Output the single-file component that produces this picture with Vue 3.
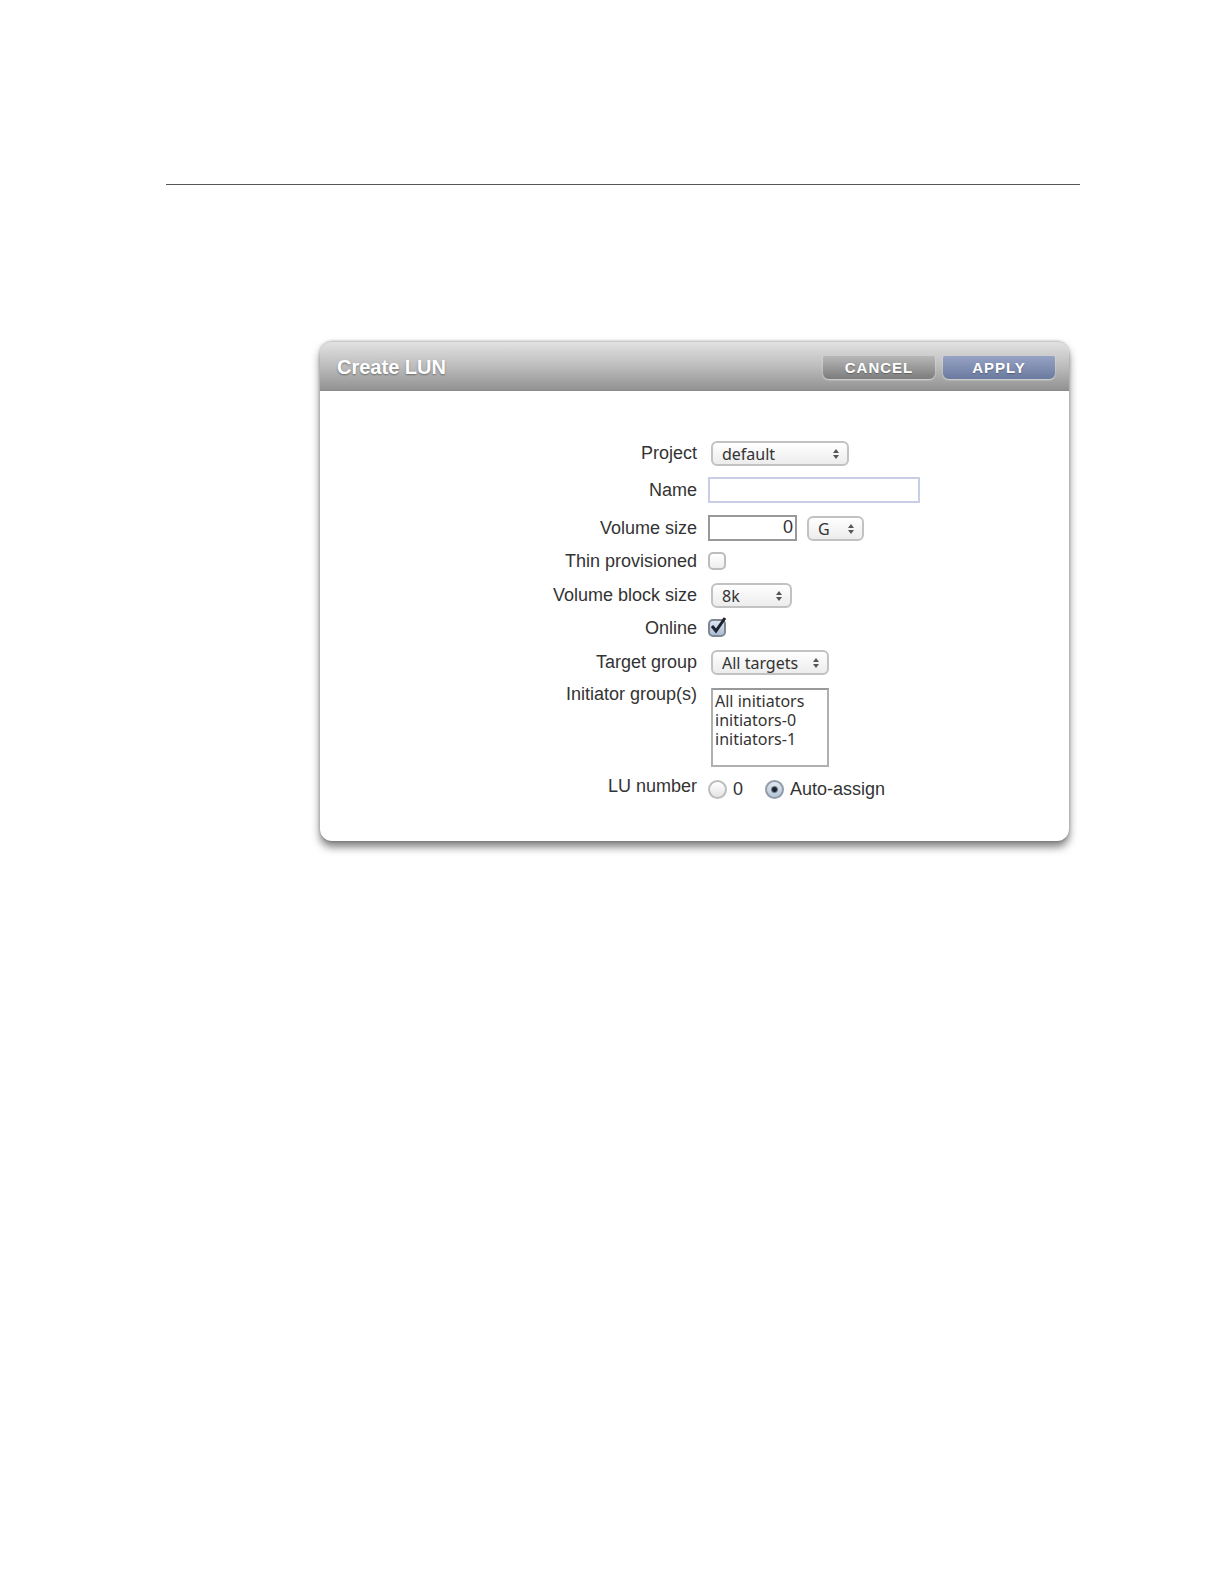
<template>
  <main class="page">
    <hr class="page-rule" />
    <form class="panel" @submit.prevent="handleSubmit">
      <header class="panel-header">
        <h1>Create LUN</h1>
        <div class="actions">
          <button type="button" class="btn" @click="handleCancel">CANCEL</button>
          <button type="submit" class="btn btn-apply">APPLY</button>
        </div>
      </header>
      <div class="fields">
        <label class="name" for="project">Project</label>
        <div class="control">
          <span class="dropdown project">
            <select id="project" v-model="form.project">
              <option>default</option>
            </select>
            <svg viewBox="0 0 8 10"><path d="M4 0L7 4H1zM4 10L1 6H7z" /></svg>
          </span>
        </div>

        <label class="name" for="lun-name">Name</label>
        <div class="control">
          <input id="lun-name" class="text text-name" type="text" v-model="form.name" />
        </div>

        <label class="name" for="size">Volume size</label>
        <div class="control">
          <input id="size" class="text text-size" type="text" v-model="form.size" />
          <span class="dropdown unit">
            <select v-model="form.unit" aria-label="Volume size unit">
              <option>M</option>
              <option>G</option>
              <option>T</option>
            </select>
            <svg viewBox="0 0 8 10"><path d="M4 0L7 4H1zM4 10L1 6H7z" /></svg>
          </span>
        </div>

        <label class="name" for="thin">Thin provisioned</label>
        <div class="control">
          <span class="tick">
            <input id="thin" type="checkbox" v-model="form.thin" />
            <svg v-if="form.thin" viewBox="0 0 20 20"><path d="M4 9L8 14L17 1" /></svg>
          </span>
        </div>

        <label class="name" for="block">Volume block size</label>
        <div class="control">
          <span class="dropdown block">
            <select id="block" v-model="form.block">
              <option>8k</option>
            </select>
            <svg viewBox="0 0 8 10"><path d="M4 0L7 4H1zM4 10L1 6H7z" /></svg>
          </span>
        </div>

        <label class="name" for="online">Online</label>
        <div class="control">
          <span class="tick">
            <input id="online" type="checkbox" v-model="form.online" />
            <svg v-if="form.online" viewBox="0 0 20 20"><path d="M4 9L8 14L17 1" /></svg>
          </span>
        </div>

        <label class="name" for="target">Target group</label>
        <div class="control">
          <span class="dropdown target">
            <select id="target" v-model="form.target">
              <option>All targets</option>
            </select>
            <svg viewBox="0 0 8 10"><path d="M4 0L7 4H1zM4 10L1 6H7z" /></svg>
          </span>
        </div>

        <label class="name name-top" for="initiators">Initiator group(s)</label>
        <div class="control">
          <select id="initiators" class="list" multiple size="4" v-model="form.initiators">
            <option v-for="item in initiators" :key="item">{{ item }}</option>
          </select>
        </div>

        <span id="lu" class="name name-top">LU number</span>
        <div class="control" role="radiogroup" aria-labelledby="lu">
          <label class="choice">
            <input type="radio" name="lu" value="0" v-model="form.lu" />0
          </label>
          <label class="choice">
            <input type="radio" name="lu" value="auto" v-model="form.lu" />Auto-assign
          </label>
        </div>
      </div>
    </form>
  </main>
</template>

<script setup>
import { reactive } from "vue";

const emit = defineEmits(["cancel", "apply"]);

const initiators = ["All initiators", "initiators-0", "initiators-1"];

const form = reactive({
  project: "default",
  name: "",
  size: "0",
  unit: "G",
  thin: false,
  block: "8k",
  online: true,
  target: "All targets",
  initiators: [],
  lu: "auto",
});

const handleCancel = () => {
  emit("cancel");
};
const handleSubmit = () => {
  emit("apply", { ...form });
};
</script>

<style>
body {
  background: #fff;
}
</style>

<style scoped>
* {
  box-sizing: border-box;
  margin: 0;
}
.page {
  padding: 184px 144px 64px 166px;
  font-family: "Liberation Sans", Arial, sans-serif;
  font-size: 18px;
  color: #333;
}
.page-rule {
  border: 0;
  border-top: 1px solid #555;
}
.panel {
  margin: 156px 11px 0 154px;
  background: #fff;
  border-radius: 12px;
  box-shadow: 0 6px 9px rgba(0, 0, 0, 0.5), 0 0 3px rgba(0, 0, 0, 0.25);
}
.panel-header {
  display: flex;
  align-items: center;
  justify-content: space-between;
  height: 50px;
  padding: 2px 14px 0 17px;
  border-radius: 12px 12px 0 0;
  border-top: 1px solid #c8c8c8;
  border-bottom: 1px solid #8a8a8a;
  background: linear-gradient(#e2e2e2, #bdbdbd 50%, #929292);
}
h1 {
  font-size: 20px;
  line-height: 24px;
  color: #fff;
  text-shadow: 0 1px 2px rgba(0, 0, 0, 0.4);
}
.actions {
  display: flex;
  gap: 8px;
}
.btn {
  width: 112px;
  height: 23px;
  padding: 0;
  border: 0;
  border-radius: 2px 2px 6px 6px;
  background: linear-gradient(#b8b8b8, #7c7c7c);
  box-shadow: 0 1px 2px rgba(255, 255, 255, 0.6);
  font-family: inherit;
  font-size: 15px;
  font-weight: bold;
  letter-spacing: 1px;
  color: #fff;
  text-shadow: 0 1px 1px rgba(0, 0, 0, 0.3);
}
.btn-apply {
  background: linear-gradient(#97a3c4, #6a799f);
}
.fields {
  display: grid;
  grid-template-columns: 1fr 1fr;
  gap: 11px;
  align-items: center;
  padding: 48px 0 42px 16px;
}
.name {
  text-align: right;
  line-height: 16px;
}
.name-top {
  align-self: start;
}
.control {
  display: flex;
  align-items: center;
}
.dropdown {
  position: relative;
  display: flex;
  height: 25px;
  margin: 2px 0 0 3px;
}
.dropdown svg {
  position: absolute;
  top: 8px;
  right: 9px;
  width: 8px;
  height: 10px;
  fill: #555;
  pointer-events: none;
}
.project {
  width: 138px;
}
.unit {
  width: 57px;
  margin-left: 10px;
}
.block {
  width: 81px;
}
.target {
  width: 118px;
}
select {
  font-family: "Noto Sans", sans-serif;
  font-size: 16px;
  color: #333;
}
.dropdown select {
  appearance: none;
  width: 100%;
  padding: 0 9px;
  border: 2px solid #c2c2c2;
  border-radius: 6px;
  background: linear-gradient(#fff, #ececec);
  line-height: 20px;
}
.text {
  height: 26px;
  padding: 0 2px;
  border: 2px solid #999;
  background: #fff;
  font-family: inherit;
  font-size: 18px;
  color: #333;
}
.text-name {
  width: 212px;
  border-color: #c9cde6;
}
.text-size {
  width: 89px;
  text-align: right;
}
.tick {
  position: relative;
  display: flex;
}
.tick input {
  appearance: none;
  width: 18px;
  height: 18px;
  border: 2px solid #bdbdbd;
  border-radius: 5px;
  background: linear-gradient(#fff, #eee);
}
.tick input:checked {
  border-color: #7e8794;
  background: linear-gradient(#dce6f2, #a9bdd4);
}
.tick svg {
  position: absolute;
  top: -2px;
  left: 0;
  width: 20px;
  height: 20px;
  fill: none;
  stroke: #1c222e;
  stroke-width: 3;
  pointer-events: none;
}
.list {
  width: 118px;
  height: 79px;
  margin: 2px 0 0 3px;
  padding: 0;
  border: 2px solid #b0b0b0;
  border-top-color: #999;
  border-radius: 0;
  background: #fff;
  overflow: hidden;
}
.list option {
  height: 19px;
  min-height: 19px;
  padding: 0 2px;
  line-height: 17px;
}
.choice {
  display: flex;
  align-items: center;
  gap: 6px;
  margin-top: 2px;
  line-height: 19px;
}
.choice + .choice {
  margin-left: 22px;
}
.choice input {
  appearance: none;
  width: 19px;
  height: 19px;
  border: 2px solid #bdbdbd;
  border-radius: 50%;
  background: linear-gradient(#fff, #e4e4e4);
}
.choice input:checked {
  border-color: #929ba7;
  background: radial-gradient(circle, #1c222e 2px, transparent 4px), linear-gradient(#e0e8f2, #b4c5d9);
}
</style>
